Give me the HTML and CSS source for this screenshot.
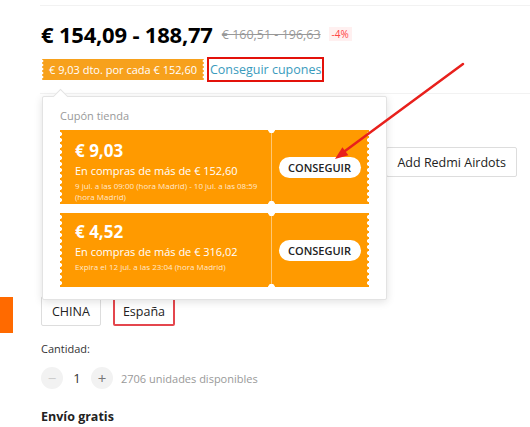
FILE: index.html
```html
<!DOCTYPE html>
<html lang="es">
<head>
    <meta charset="UTF-8">
    <meta name="viewport" content="width=device-width, initial-scale=1.0">
    <title>Cupones</title>
    <link rel="stylesheet" href="styles.css">
</head>
<body>

    <div class="side-tab"></div>

    <div class="page">
        <div class="top-rule"></div>

        <div class="price-row">
            <span class="price">€ 154,09 - 188,77</span>
            <span class="old-price">€ 160,51 - 196,63</span>
            <span class="discount">-4%</span>
        </div>

        <div class="promo-row">
            <span class="promo-tag">€ 9,03 dto. por cada € 152,60</span>
            <a class="coupon-link" href="#">Conseguir cupones</a>

            <!-- popup de cupones -->
            <div class="coupon-pop">
                <div class="pop-title">Cupón tienda</div>

                <div class="coupon">
                    <div class="coupon-main">
                        <div class="coupon-amount">€ 9,03</div>
                        <div class="coupon-cond">En compras de más de € 152,60</div>
                        <div class="coupon-date">9 jul. a las 09:00 (hora Madrid) - 10 jul. a las 08:59 (hora Madrid)</div>
                    </div>
                    <div class="coupon-action">
                        <button class="get-btn">CONSEGUIR</button>
                    </div>
                </div>

                <div class="coupon coupon-second">
                    <div class="coupon-main">
                        <div class="coupon-amount">€ 4,52</div>
                        <div class="coupon-cond">En compras de más de € 316,02</div>
                        <div class="coupon-date">Expira el 12 jul. a las 23:04 (hora Madrid)</div>
                    </div>
                    <div class="coupon-action">
                        <button class="get-btn">CONSEGUIR</button>
                    </div>
                </div>
            </div>
        </div>

        <div class="rule"></div>

        <div class="sku-row">
            <button class="sku">Add Redmi Airdots</button>
        </div>

        <div class="ship-row">
            <button class="sku">CHINA</button>
            <button class="sku selected">España</button>
        </div>

        <div class="qty-label">Cantidad:</div>
        <div class="qty-row">
            <span class="qty-btn disabled">&minus;</span>
            <span class="qty-value">1</span>
            <span class="qty-btn">+</span>
            <span class="stock">2706 unidades disponibles</span>
        </div>

        <div class="shipping">Envío gratis</div>
    </div>

    <!-- flecha de anotación -->
    <svg class="note-arrow" width="530" height="427" viewBox="0 0 530 427">
        <line x1="463" y1="64" x2="345" y2="151" stroke="#e8201c" stroke-width="2.5" stroke-linecap="round"/>
        <polygon points="335,159 348.4,155.3 342.4,147.2" fill="#e8201c"/>
    </svg>

</body>
</html>
```

FILE: styles.css
```css
body {
    font-family: 'Open Sans', 'Liberation Sans', sans-serif;
    margin: 0;
    padding: 0;
    color: #222;
    background: #fff;
    overflow: hidden;
}

.page {
    padding-left: 41px;
}

.top-rule {
    height: 1px;
    margin: 5px 0 0 -1px;
    background: #f2f2f2;
}

.price-row {
    display: flex;
    align-items: center;
    margin-top: 12px;
    height: 32px;
}

.price {
    font-size: 22px;
    font-weight: 700;
    line-height: 32px;
    letter-spacing: -0.2px;
    color: #000;
}

.old-price {
    margin-left: 9px;
    font-size: 12.5px;
    color: #999;
    text-decoration: line-through;
}

.discount {
    margin-left: 8px;
    padding: 0 3px;
    height: 14px;
    line-height: 14px;
    font-size: 10px;
    color: #f44;
    background: #fff0f0;
}

.promo-row {
    position: relative;
    display: flex;
    align-items: center;
    margin-top: 7px;
    height: 25px;
}

/* etiqueta con bordes perforados */
.promo-tag {
    position: relative;
    height: 21px;
    line-height: 21px;
    padding: 0 7px;
    font-size: 11px;
    color: #fff;
    background: #f7a11c;
    margin-left: 1px;
}

.promo-tag::before,
.promo-tag::after {
    content: '';
    position: absolute;
    top: 0;
    bottom: 0;
    width: 4px;
    background: radial-gradient(circle, #fff 1.2px, transparent 1.7px) 0 0 / 4px 4px repeat-y;
}

.promo-tag::before { left: -2px; }
.promo-tag::after { right: -2px; }

.coupon-link {
    margin-left: 3px;
    height: 21px;
    line-height: 21px;
    padding: 0 1px;
    border: 2px solid #e3120b;
    font-size: 12.5px;
    color: #3a9bbd;
    text-decoration: none;
}

.coupon-pop {
    position: absolute;
    top: 100%;
    left: 1px;
    margin-top: 14px;
    width: 309px;
    padding: 12px 17px 12px 17px;
    background: #fff;
    border: 1px solid #e3e3e3;
    border-radius: 2px;
    box-shadow: 0 2px 8px rgba(0, 0, 0, 0.12);
    z-index: 2;
}

.coupon-pop::before {
    content: '';
    position: absolute;
    top: -6px;
    left: 12px;
    width: 10px;
    height: 10px;
    background: #fff;
    border-top: 1px solid #e3e3e3;
    border-left: 1px solid #e3e3e3;
    transform: rotate(45deg);
}

.pop-title {
    font-size: 11px;
    line-height: 14px;
    color: #999;
    margin-bottom: 7px;
}

.coupon {
    display: flex;
    height: 74px;
    background: #ff9a00;
    color: #fff;
}

.coupon-second {
    margin-top: 9px;
}

.coupon-main {
    position: relative;
    width: 196px;
    padding: 10px 0 0 15px;
}

.coupon-second .coupon-main {
    padding-top: 8px;
}

.coupon-main::before,
.coupon-action::after {
    content: '';
    position: absolute;
    top: 0;
    bottom: 0;
    width: 6px;
    background: radial-gradient(circle, #fff 1.8px, transparent 2.3px) 0 1px / 6px 6px repeat-y;
}

.coupon-main::before { left: -3px; }
.coupon-action::after { right: -3px; }

.coupon-amount {
    font-size: 17px;
    font-weight: 700;
    line-height: 21px;
}

.coupon-cond {
    font-size: 11px;
    line-height: 16px;
    margin-top: 2px;
}

.coupon-date {
    font-size: 8px;
    line-height: 11px;
    color: rgba(255, 255, 255, 0.8);
    margin-top: 1px;
}

.coupon-action {
    position: relative;
    flex: 1;
    display: flex;
    justify-content: center;
    align-items: center;
    border-left: 1px solid rgba(255, 255, 255, 0.45);
}

.coupon-action::before {
    content: '';
    position: absolute;
    top: 0;
    bottom: 0;
    left: -4px;
    width: 7px;
    background:
        radial-gradient(circle at 50% 0, #fff 3px, transparent 3.5px),
        radial-gradient(circle at 50% 100%, #fff 3px, transparent 3.5px);
}

.get-btn {
    width: 82px;
    height: 21px;
    padding: 0;
    border: none;
    border-radius: 11px;
    background: #fff;
    font-family: 'Open Sans', sans-serif;
    font-size: 11px;
    font-weight: 600;
    color: #222;
    margin-left: -2px;
}

.rule {
    height: 1px;
    margin: 11px 0 0 -1px;
    background: #f2f2f2;
}

.sku-row {
    display: flex;
    justify-content: flex-end;
    padding-right: 13px;
    margin-top: 53px;
}

.sku {
    height: 30px;
    padding: 0 10px;
    border: 1px solid #ddd;
    border-radius: 2px;
    background: #fff;
    font-family: 'Open Sans', sans-serif;
    font-size: 12.5px;
    color: #222;
}

.ship-row {
    display: flex;
    gap: 12px;
    margin-top: 119px;
}

.sku.selected {
    border: 2px solid #e4464d;
    padding: 0 8px;
}

.qty-label {
    margin-top: 15px;
    font-size: 11px;
    line-height: 16px;
    color: #333;
}

.qty-row {
    display: flex;
    align-items: center;
    margin-top: 10px;
    height: 22px;
}

.qty-btn {
    width: 22px;
    height: 22px;
    border-radius: 50%;
    background: #f2f2f2;
    color: #777;
    font-size: 15px;
    line-height: 22px;
    text-align: center;
}

.qty-btn.disabled {
    color: #ccc;
}

.qty-value {
    width: 28px;
    text-align: center;
    font-size: 13px;
    color: #333;
}

.stock {
    margin-left: 8px;
    font-size: 11px;
    color: #999;
}

.shipping {
    margin-top: 18px;
    font-size: 12.5px;
    font-weight: 700;
    line-height: 20px;
    color: #222;
}

.side-tab {
    position: absolute;
    left: 0;
    top: 297px;
    width: 13px;
    height: 36px;
    background: #ff6a00;
}

.note-arrow {
    position: absolute;
    top: 0;
    left: 0;
    pointer-events: none;
    z-index: 5;
}
```
